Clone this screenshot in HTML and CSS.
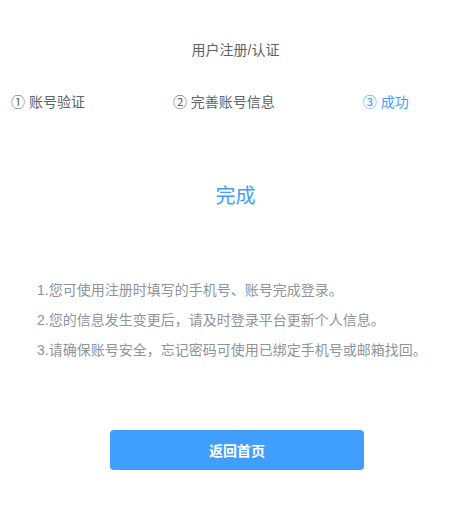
FILE: index.html
```html
<!DOCTYPE html>
<html lang="zh-CN">
<head>
    <meta charset="UTF-8">
    <meta name="viewport" content="width=device-width, initial-scale=1.0">
    <title>用户注册/认证</title>
    <link rel="stylesheet" href="styles.css">
</head>
<body>
    <div class="page">
        <h1 class="title">用户注册/认证</h1>

        <div class="steps">
            <span class="step">① 账号验证</span>
            <span class="step">② 完善账号信息</span>
            <span class="step active">③ 成功</span>
        </div>

        <h2 class="done">完成</h2>

        <ul class="notes">
            <li>1.您可使用注册时填写的手机号、账号完成登录。</li>
            <li>2.您的信息发生变更后，请及时登录平台更新个人信息。</li>
            <li>3.请确保账号安全，忘记密码可使用已绑定手机号或邮箱找回。</li>
        </ul>

        <div class="actions">
            <button class="home-btn">返回首页</button>
        </div>
    </div>
</body>
</html>
```

FILE: styles.css
```css
body {
    margin: 0;
    font-family: "Liberation Sans", "Noto Sans CJK SC", sans-serif;
    background-color: #fff;
}
.page {
    padding-top: 40px;
}
.title {
    margin: 0;
    font-size: 14px;
    font-weight: normal;
    line-height: 20px;
    color: #606266;
    text-align: center;
}
.steps {
    display: flex;
    gap: 88px;
    margin-top: 32px;
    padding-left: 11px;
    font-size: 14px;
    line-height: 20px;
    color: #606266;
}
.step.active {
    color: #409eff;
}
.done {
    margin: 70px 0 0;
    font-size: 20px;
    font-weight: normal;
    line-height: 28px;
    color: #409eff;
    text-align: center;
}
.notes {
    list-style: none;
    margin: 65px 0 0;
    padding-left: 37px;
    font-size: 14px;
    line-height: 30px;
    color: #909399;
}
.actions {
    display: flex;
    justify-content: center;
    margin-top: 65px;
}
.home-btn {
    width: 254px;
    height: 40px;
    margin-left: 3px;
    background-color: #409eff;
    color: #fff;
    border: none;
    border-radius: 4px;
    font-family: inherit;
    font-size: 14px;
    font-weight: bold;
    cursor: pointer;
}
```
